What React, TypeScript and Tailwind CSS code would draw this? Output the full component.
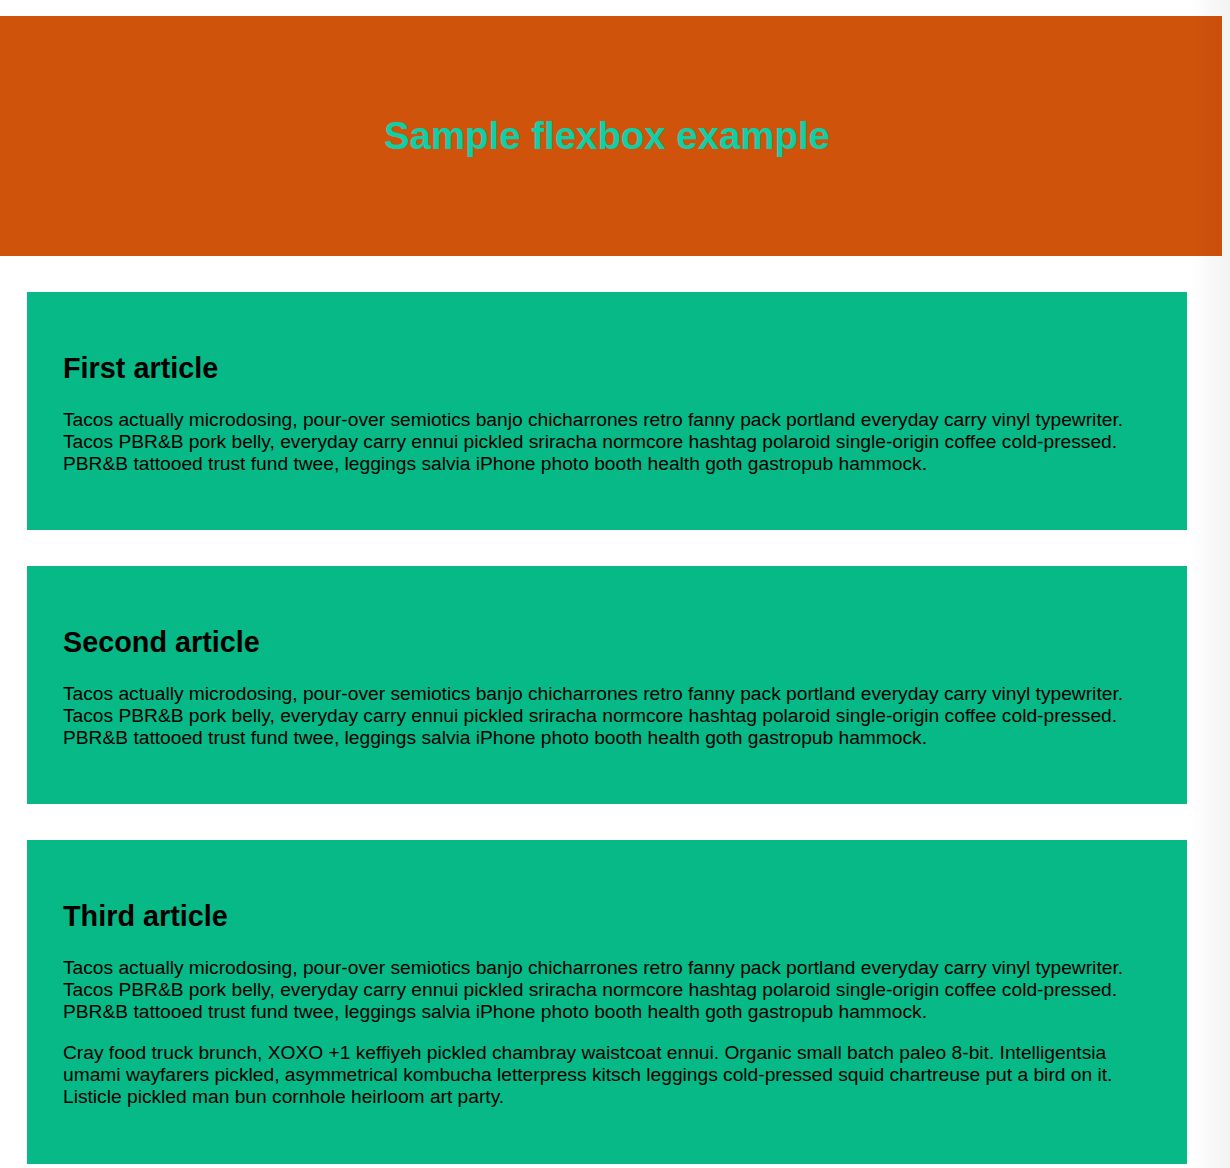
import React from 'react';

const App = () => {
  const intro =
    "Tacos actually microdosing, pour-over semiotics banjo chicharrones retro fanny pack portland everyday carry vinyl typewriter. Tacos PBR&B pork belly, everyday carry ennui pickled sriracha normcore hashtag polaroid single-origin coffee cold-pressed. PBR&B tattooed trust fund twee, leggings salvia iPhone photo booth health goth gastropub hammock.";

  const articles = [
    { title: "First article", paragraphs: [intro] },
    { title: "Second article", paragraphs: [intro] },
    {
      title: "Third article",
      paragraphs: [
        intro,
        "Cray food truck brunch, XOXO +1 keffiyeh pickled chambray waistcoat ennui. Organic small batch paleo 8-bit. Intelligentsia umami wayfarers pickled, asymmetrical kombucha letterpress kitsch leggings cold-pressed squid chartreuse put a bird on it. Listicle pickled man bun cornhole heirloom art party.",
      ],
    },
  ];

  return (
    <div className="relative w-[1230px] min-h-[1168px] bg-white font-['Liberation_Sans',Arial,sans-serif] text-[19.2px] leading-[1.15] text-black overflow-hidden">
      <header className="mt-[16px] w-[1222px] h-[240px] bg-[#d0530b] flex items-center justify-center pr-[8px]">
        <h1 className="text-[38.4px] font-bold text-[#10cfa8]">Sample flexbox example</h1>
      </header>

      <div className="flex flex-col gap-[36px] pt-[36px] pl-[27px]">
        {articles.map((article, index) => (
          <article key={index} className="w-[1160px] bg-[#06b986] p-[36px]">
            <h2 className="mt-[24px] mb-[23.5px] text-[28.8px] font-bold">{article.title}</h2>
            {article.paragraphs.map((text, i) => (
              <p key={i} className="mb-[19.2px]">
                {text}
              </p>
            ))}
          </article>
        ))}
      </div>

      <div className="pointer-events-none absolute top-0 right-0 h-full w-[40px] bg-gradient-to-r from-transparent to-black/[0.05]" />
    </div>
  );
};

export default App;
